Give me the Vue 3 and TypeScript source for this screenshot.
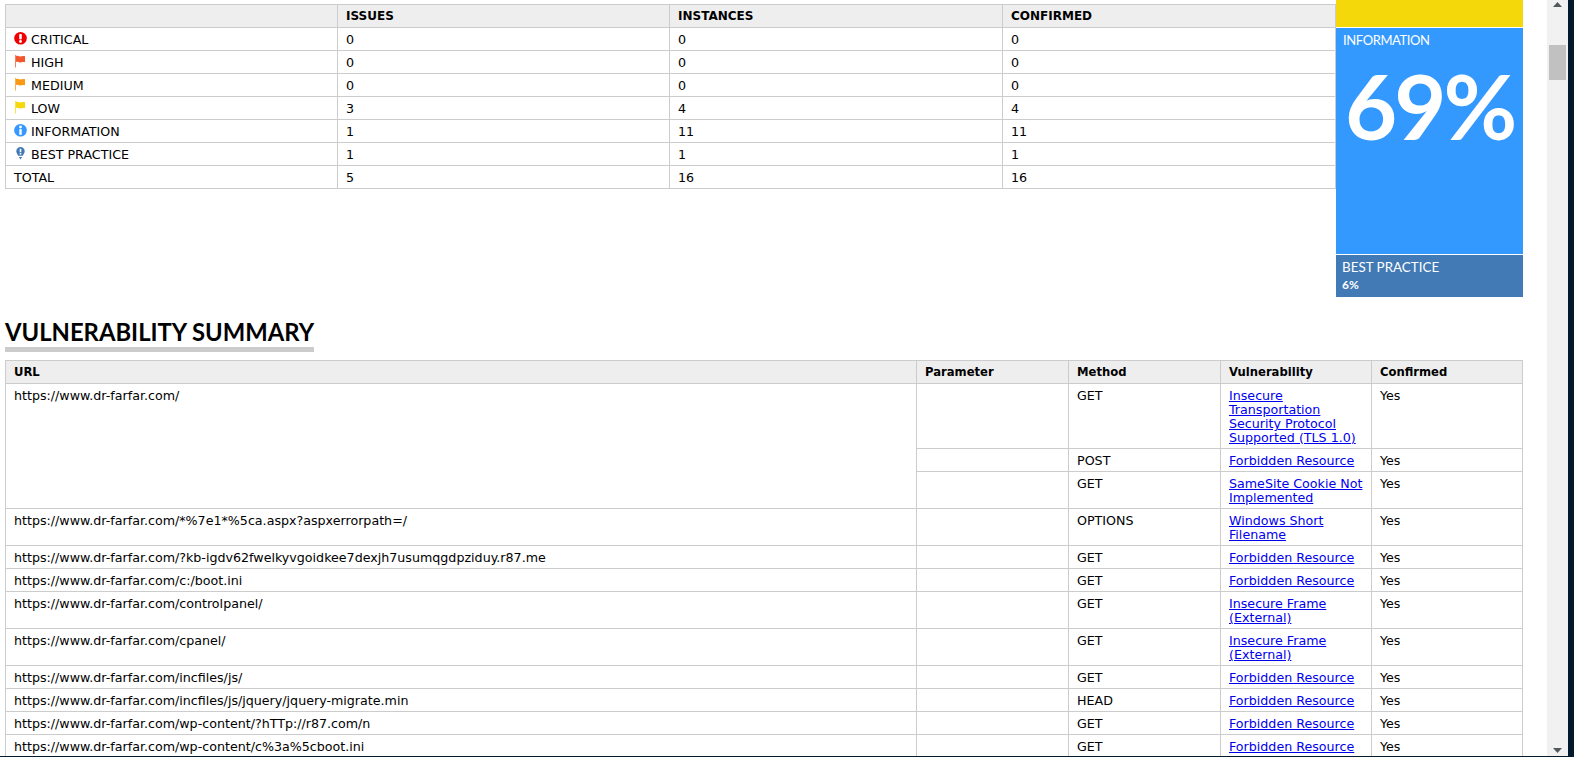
<script setup lang="ts">
interface Risk { name: string; icon: string; issues: number; instances: number; confirmed: number }
const risks: Risk[] = [
  { name: 'CRITICAL', icon: 'critical', issues: 0, instances: 0, confirmed: 0 },
  { name: 'HIGH', icon: 'high', issues: 0, instances: 0, confirmed: 0 },
  { name: 'MEDIUM', icon: 'medium', issues: 0, instances: 0, confirmed: 0 },
  { name: 'LOW', icon: 'low', issues: 3, instances: 4, confirmed: 4 },
  { name: 'INFORMATION', icon: 'info', issues: 1, instances: 11, confirmed: 11 },
  { name: 'BEST PRACTICE', icon: 'best', issues: 1, instances: 1, confirmed: 1 },
]
const flagColors: Record<string, string> = { high: '#f4572c', medium: '#fb9a12', low: '#f5d80a' }

interface Finding { url?: string; span?: number; method: string; vuln: string }
const findings: Finding[] = [
  { url: 'https://www.dr-farfar.com/', span: 3, method: 'GET', vuln: 'Insecure Transportation Security Protocol Supported (TLS 1.0)' },
  { method: 'POST', vuln: 'Forbidden Resource' },
  { method: 'GET', vuln: 'SameSite Cookie Not Implemented' },
  { url: 'https://www.dr-farfar.com/*%7e1*%5ca.aspx?aspxerrorpath=/', method: 'OPTIONS', vuln: 'Windows Short Filename' },
  { url: 'https://www.dr-farfar.com/?kb-igdv62fwelkyvgoidkee7dexjh7usumqgdpziduy.r87.me', method: 'GET', vuln: 'Forbidden Resource' },
  { url: 'https://www.dr-farfar.com/c:/boot.ini', method: 'GET', vuln: 'Forbidden Resource' },
  { url: 'https://www.dr-farfar.com/controlpanel/', method: 'GET', vuln: 'Insecure Frame (External)' },
  { url: 'https://www.dr-farfar.com/cpanel/', method: 'GET', vuln: 'Insecure Frame (External)' },
  { url: 'https://www.dr-farfar.com/incfiles/js/', method: 'GET', vuln: 'Forbidden Resource' },
  { url: 'https://www.dr-farfar.com/incfiles/js/jquery/jquery-migrate.min', method: 'HEAD', vuln: 'Forbidden Resource' },
  { url: 'https://www.dr-farfar.com/wp-content/?hTTp://r87.com/n', method: 'GET', vuln: 'Forbidden Resource' },
  { url: 'https://www.dr-farfar.com/wp-content/c%3a%5cboot.ini', method: 'GET', vuln: 'Forbidden Resource' },
]
</script>

<template>
  <div class="shell">
    <main class="page">
      <section class="overview">
        <table class="grid risk-table">
          <colgroup>
            <col class="c-num" /><col class="c-num" /><col class="c-mid" /><col class="c-mid" />
          </colgroup>
          <thead>
            <tr><th></th><th>ISSUES</th><th>INSTANCES</th><th>CONFIRMED</th></tr>
          </thead>
          <tbody>
            <tr v-for="r in risks" :key="r.name">
              <td>
                <svg v-if="r.icon === 'critical'" class="ico" viewBox="0 0 13 13">
                  <circle cx="6.5" cy="6.3" r="6.3" fill="#f00000" />
                  <rect x="5.2" y="2" width="2.6" height="5.4" rx="0.8" fill="#fff" />
                  <circle cx="6.5" cy="9.5" r="1.4" fill="#fff" />
                </svg>
                <svg v-else-if="r.icon === 'info'" class="ico" viewBox="0 0 13 13">
                  <circle cx="6.5" cy="6.3" r="6.3" fill="#3399ff" />
                  <circle cx="6.5" cy="3" r="1.4" fill="#fff" />
                  <rect x="5.3" y="5.2" width="2.4" height="5.6" fill="#fff" />
                </svg>
                <svg v-else-if="r.icon === 'best'" class="ico" viewBox="0 0 13 13">
                  <path d="M6.5 0a4.2 4.2 0 0 1 4.2 4.2c0 1.9-1.3 2.9-1.9 4.6H4.2c-.6-1.7-1.9-2.7-1.9-4.6A4.2 4.2 0 0 1 6.5 0z" fill="#417ab5" />
                  <rect x="5.7" y="1.8" width="1.6" height="3.4" fill="#fff" />
                  <rect x="5.7" y="6" width="1.6" height="1.5" fill="#fff" />
                  <path d="M4.8 10h3.4L6.5 12.5z" fill="#417ab5" />
                </svg>
                <svg v-else class="ico" viewBox="0 0 13 13">
                  <rect x="1" y="0" width="1" height="12.5" :fill="flagColors[r.icon]" opacity="0.75" />
                  <path d="M2 1c1.5-.6 2.5.5 4 .4 1.5-.1 2.5-.5 5-.2v6c-2.5-.3-3.5.1-5 .2-1.5.1-2.5-1-4-.4z" :fill="flagColors[r.icon]" />
                </svg>
                {{ r.name }}
              </td>
              <td>{{ r.issues }}</td>
              <td>{{ r.instances }}</td>
              <td>{{ r.confirmed }}</td>
            </tr>
            <tr><td>TOTAL</td><td>5</td><td>16</td><td>16</td></tr>
          </tbody>
        </table>
        <aside class="share">
          <div class="share-low"></div>
          <div class="share-info">
            <div class="label-info">INFORMATION</div>
            <div class="share-big">69%</div>
          </div>
          <div class="share-best">
            <div class="label-best">BEST PRACTICE</div>
            <div class="share-small">6%</div>
          </div>
        </aside>
      </section>

      <h2 class="title">VULNERABILITY SUMMARY</h2>

      <table class="grid vuln-table">
        <colgroup>
          <col class="c-url" /><col class="c-wide" /><col class="c-wide" /><col class="c-col" /><col class="c-col" />
        </colgroup>
        <thead>
          <tr><th>URL</th><th>Parameter</th><th>Method</th><th>Vulnerability</th><th>Confirmed</th></tr>
        </thead>
        <tbody>
          <tr v-for="(f, i) in findings" :key="i">
            <td v-if="f.url" :rowspan="f.span ?? 1">{{ f.url }}</td>
            <td></td>
            <td>{{ f.method }}</td>
            <td><a href="#">{{ f.vuln }}</a></td>
            <td>Yes</td>
          </tr>
        </tbody>
      </table>
    </main>

    <div class="scrollbar">
      <svg class="arrow" viewBox="0 0 9 5"><path d="M4.5 0L9 5H0z" fill="#505a5c" /></svg>
      <div class="thumb"></div>
      <svg class="arrow arrow-down" viewBox="0 0 9 5"><path d="M0 0h9L4.5 5z" fill="#505a5c" /></svg>
    </div>
    <div class="edge"></div>
  </div>
</template>

<style>
html, body { margin: 0; background: #fff; overflow: hidden; }
</style>

<style scoped>
.shell {
  display: grid;
  grid-template-columns: 1547px 21px 6px;
  height: 756px;
  overflow: hidden;
  border-bottom: 1px solid #031a2d;
  font-family: "DejaVu Sans", Verdana, sans-serif;
  font-size: 12.67px;
  line-height: 14px;
  color: #000;
}
.page { padding-left: 5px; overflow: hidden; }
.overview { display: flex; align-items: flex-start; height: 297px; }
.grid {
  border-collapse: collapse;
  table-layout: fixed;
  flex: none;
}
.grid th, .grid td {
  border: 1px solid #ccc;
  text-align: left;
  vertical-align: top;
}
.grid th { padding: 4px 8px; background: #eee; font-weight: 700; font-size: 11.6px; }
.grid td { padding: 5px 8px 3px; }
.risk-table th { font-size: 12px; }
.risk-table { width: 1331px; margin-top: 4px; }
.c-num { width: 332px; }
.c-mid { width: 333px; }
.ico { width: 13px; height: 13px; vertical-align: top; margin-top: -1px; }
.share { width: 187px; flex: none; color: #fff; font-family: Lato, "Open Sans", sans-serif; }
.share-low { height: 27px; background: #f5d80a; margin-bottom: 1px; }
.share-info { height: 226px; background: #3399ff; margin-bottom: 1px; padding: 4px 7px 0; box-sizing: border-box; overflow: hidden; }
.share-best { height: 42px; background: #417ab5; padding: 4px 6px 0; box-sizing: border-box; }
.label-info { font-size: 13px; line-height: 16px; letter-spacing: -0.4px; }
.label-best { font-size: 13.4px; line-height: 16px; }
.share-big { font-size: 90px; line-height: 96px; font-weight: 700; margin: 9px 0 0 2px; letter-spacing: -3px; white-space: nowrap; }
.share-small { font-size: 12px; line-height: 14px; font-weight: 700; margin-top: 3px; }
.title {
  display: inline-block;
  margin: 20px 0 8px;
  border-bottom: 5px solid #ccc;
  font-family: Lato, "Open Sans", sans-serif;
  font-size: 23.8px;
  line-height: 30px;
  font-weight: 700;
  vertical-align: top;
}
.vuln-table { width: 1517px; }
.c-url { width: 911px; }
.c-wide { width: 152px; }
.c-col { width: 151px; }
a { color: #0000ee; }
.scrollbar {
  background: #f1f1f1;
  display: flex;
  flex-direction: column;
  align-items: center;
}
.arrow { width: 9px; height: 5px; margin-top: 2px; flex: none; }
.arrow-down { margin: auto 0 3px; }
.thumb { width: 17px; height: 35px; background: #c1c1c1; margin-top: 38px; flex: none; }
.edge { background: #031a2d; }
</style>
